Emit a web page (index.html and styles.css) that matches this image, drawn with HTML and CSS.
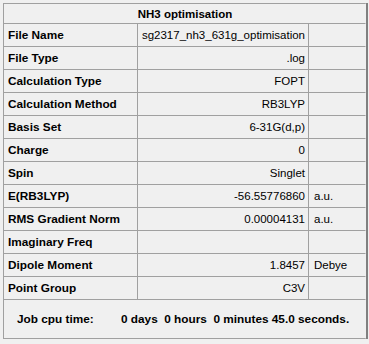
FILE: index.html
```html
<!DOCTYPE html>
<html>
<head>
<meta charset="utf-8">
<link rel="stylesheet" href="styles.css">
</head>
<body>
<div class="frame">
  <div class="panel">
    <div class="grid">
      <div class="title">NH3 optimisation</div>

      <div class="lbl">File Name</div><div class="val">sg2317_nh3_631g_optimisation</div><div class="unit"></div>
      <div class="lbl">File Type</div><div class="val">.log</div><div class="unit"></div>
      <div class="lbl">Calculation Type</div><div class="val">FOPT</div><div class="unit"></div>
      <div class="lbl">Calculation Method</div><div class="val">RB3LYP</div><div class="unit"></div>
      <div class="lbl">Basis Set</div><div class="val">6-31G(d,p)</div><div class="unit"></div>
      <div class="lbl">Charge</div><div class="val">0</div><div class="unit"></div>
      <div class="lbl">Spin</div><div class="val">Singlet</div><div class="unit"></div>
      <div class="lbl">E(RB3LYP)</div><div class="val">-56.55776860</div><div class="unit">a.u.</div>
      <div class="lbl">RMS Gradient Norm</div><div class="val">0.00004131</div><div class="unit">a.u.</div>
      <div class="lbl">Imaginary Freq</div><div class="val"></div><div class="unit"></div>
      <div class="lbl">Dipole Moment</div><div class="val">1.8457</div><div class="unit">Debye</div>
      <div class="lbl">Point Group</div><div class="val">C3V</div><div class="unit"></div>

      <div class="footer">
        <span class="cpu-label">Job cpu time:</span>
        <span class="cpu-value">0 days&nbsp; 0 hours&nbsp; 0 minutes 45.0 seconds.</span>
      </div>
    </div>
  </div>
</div>
</body>
</html>
```

FILE: styles.css
```css
html, body {
  margin: 0;
  padding: 0;
  background: #f0f0f0;
}

body {
  padding: 3px 0 0 3px;
  font-family: "Liberation Sans", Arial, sans-serif;
  font-size: 11.5px;
  color: #000;
}

.frame {
  width: 363px;
  border-right: 2px solid #808080;
}

.panel {
  border: 1px solid #a0a0a0;
  border-right-color: #c8c8c8;
}

.grid {
  display: grid;
  grid-template-columns: 133px 170px 57px;
  grid-template-rows: 19px repeat(12, 22px) 38px;
  gap: 1px;
  background: #a0a0a0;
}

.grid > div {
  background: #f0f0f0;
  display: flex;
  align-items: center;
  white-space: nowrap;
  overflow: hidden;
}

.title {
  grid-column: 1 / -1;
  justify-content: center;
  font-weight: bold;
}

.lbl {
  font-weight: bold;
  font-size: 11.8px;
  padding-left: 4px;
}

.val {
  justify-content: flex-end;
  padding-right: 3px;
}

.unit {
  padding-left: 5px;
}

.footer {
  grid-column: 1 / -1;
  font-weight: bold;
  font-size: 11.8px;
}

.cpu-label {
  margin-left: 13px;
  width: 104px;
}
```
